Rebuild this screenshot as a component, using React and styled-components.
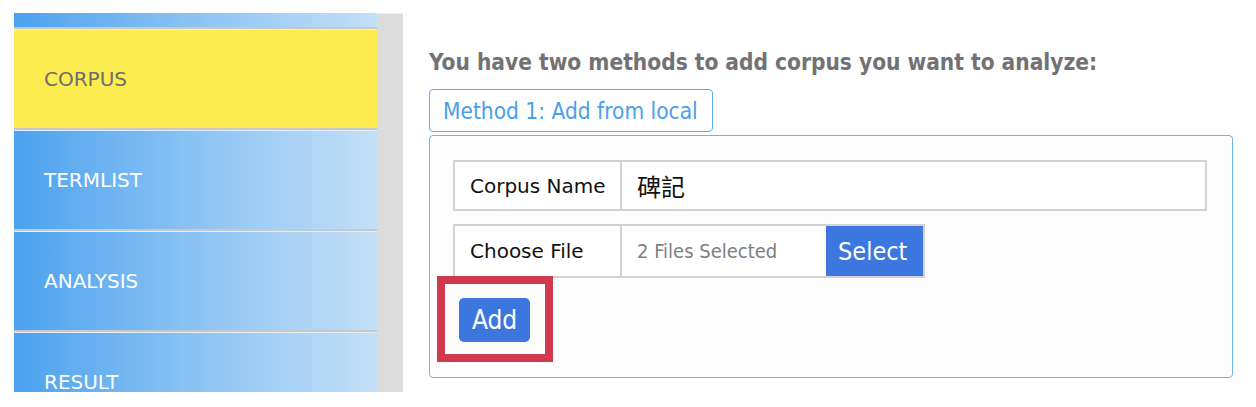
import React from 'react';
import styled, { createGlobalStyle } from 'styled-components';

const GlobalStyle = createGlobalStyle`
  html, body {
    margin: 0;
    padding: 0;
    background: #fefefe;
  }
  * {
    box-sizing: border-box;
  }
`;

const VERDANA = `"DejaVu Sans", Verdana, sans-serif`;
const TAHOMA = `"DejaVu Sans Condensed", "DejaVu Sans", Tahoma, sans-serif`;

const Page = styled.div`
  display: flex;
  padding: 13px 23px 0 14px;
  width: 1256px;
  height: 407px;
  overflow: hidden;
`;

const Sidebar = styled.nav`
  width: 363px;
  height: 379px;
  overflow: hidden;
  flex-shrink: 0;
`;

const MenuList = styled.ul`
  list-style: none;
  margin: -85px 0 0 0;
  padding: 0;
`;

const MenuItem = styled.li`
  display: flex;
  align-items: center;
  height: 101px;
  padding-left: 30px;
  border-top: 1px solid #e4eef8;
  border-bottom: 2px solid #c6c8ca;
  font-family: ${VERDANA};
  font-size: 20px;
  color: ${props => (props.$active ? '#6e6e6e' : '#ffffff')};
  background: ${props =>
    props.$active
      ? '#fcec50'
      : 'linear-gradient(to right, #4ba2ee 0%, #86c0f3 45%, #c4e0f8 100%)'};
`;

const Gutter = styled.div`
  width: 26px;
  height: 379px;
  flex-shrink: 0;
  background: #dcdcdc;
  border-top: 1px solid #ececec;
`;

const Main = styled.main`
  flex: 1;
  padding: 36px 0 0 26px;
  display: flex;
  flex-direction: column;
`;

const Heading = styled.h2`
  margin: 0 0 14px 0;
  font-family: ${TAHOMA};
  font-weight: bold;
  font-size: 22.5px;
  line-height: 26px;
  color: #727272;
`;

const MethodTab = styled.div`
  align-self: flex-start;
  height: 43px;
  display: flex;
  align-items: center;
  padding: 0 14px 0 13px;
  border: 1px solid #5eacf0;
  border-radius: 4px;
  font-family: ${TAHOMA};
  font-size: 22.5px;
  color: #4a9feb;
  margin-bottom: 3px;
`;

const Panel = styled.section`
  border: 1px solid #6bb3f2;
  border-radius: 4px;
  background: #fdfdfd;
  padding: 24px 25px 35px 23px;
  height: 243px;
`;

const FieldRow = styled.div`
  display: flex;
  height: ${props => props.$height}px;
  width: ${props => (props.$fit ? 'auto' : '100%')};
  align-self: flex-start;
  margin-bottom: ${props => props.$gap || 0}px;
  border: 2px solid #d2d2d2;
  background: #ffffff;
`;

const FieldLabel = styled.div`
  width: 167px;
  flex-shrink: 0;
  display: flex;
  align-items: center;
  padding-left: 15px;
  border-right: 2px solid #d2d2d2;
  font-family: ${VERDANA};
  font-size: 20px;
  color: #111111;
`;

const FieldValue = styled.div`
  flex: ${props => (props.$width ? '0 0 auto' : 1)};
  width: ${props => (props.$width ? `${props.$width}px` : 'auto')};
  display: flex;
  align-items: center;
  padding-left: 15px;
  font-family: ${props =>
    props.$cjk ? `"Noto Sans CJK TC", "Noto Sans CJK SC", sans-serif` : TAHOMA};
  font-size: ${props => (props.$cjk ? 24 : 20)}px;
  color: ${props => (props.$muted ? '#808080' : '#111111')};
`;

const SelectButton = styled.button`
  width: 97px;
  margin: 0;
  border: none;
  background: #3c77e0;
  color: #ffffff;
  font-family: ${TAHOMA};
  font-size: 25px;
  padding: 0 0 0 12px;
  text-align: left;
`;

const Form = styled.div`
  display: flex;
  flex-direction: column;
`;

const AddArea = styled.div`
  position: relative;
  align-self: flex-start;
  margin-left: 6px;
`;

const AddButton = styled.button`
  width: 71px;
  height: 44px;
  border: none;
  border-radius: 5px;
  background: #3c77e0;
  color: #ffffff;
  font-family: ${TAHOMA};
  font-size: 26px;
  padding: 0;
`;

const Highlight = styled.div`
  position: absolute;
  left: -22px;
  top: -22px;
  width: 116px;
  height: 86px;
  border: 8px solid #d03a4e;
  pointer-events: none;
`;

const menu = [
  { label: '', active: false },
  { label: 'CORPUS', active: true },
  { label: 'TERMLIST', active: false },
  { label: 'ANALYSIS', active: false },
  { label: 'RESULT', active: false },
];

export default function App() {
  return (
    <>
      <GlobalStyle />
      <Page>
        <Sidebar>
          <MenuList>
            {menu.map((item, i) => (
              <MenuItem key={i} $active={item.active}>
                {item.label}
              </MenuItem>
            ))}
          </MenuList>
        </Sidebar>
        <Gutter />
        <Main>
          <Heading>You have two methods to add corpus you want to analyze:</Heading>
          <MethodTab>Method 1: Add from local</MethodTab>
          <Panel>
            <Form>
              <FieldRow $height={51} $gap={13}>
                <FieldLabel>Corpus Name</FieldLabel>
                <FieldValue $cjk>碑記</FieldValue>
              </FieldRow>
              <FieldRow $height={54} $gap={20} $fit>
                <FieldLabel>Choose File</FieldLabel>
                <FieldValue $width={204} $muted>
                  2 Files Selected
                </FieldValue>
                <SelectButton>Select</SelectButton>
              </FieldRow>
              <AddArea>
                <AddButton>Add</AddButton>
                <Highlight />
              </AddArea>
            </Form>
          </Panel>
        </Main>
      </Page>
    </>
  );
}
